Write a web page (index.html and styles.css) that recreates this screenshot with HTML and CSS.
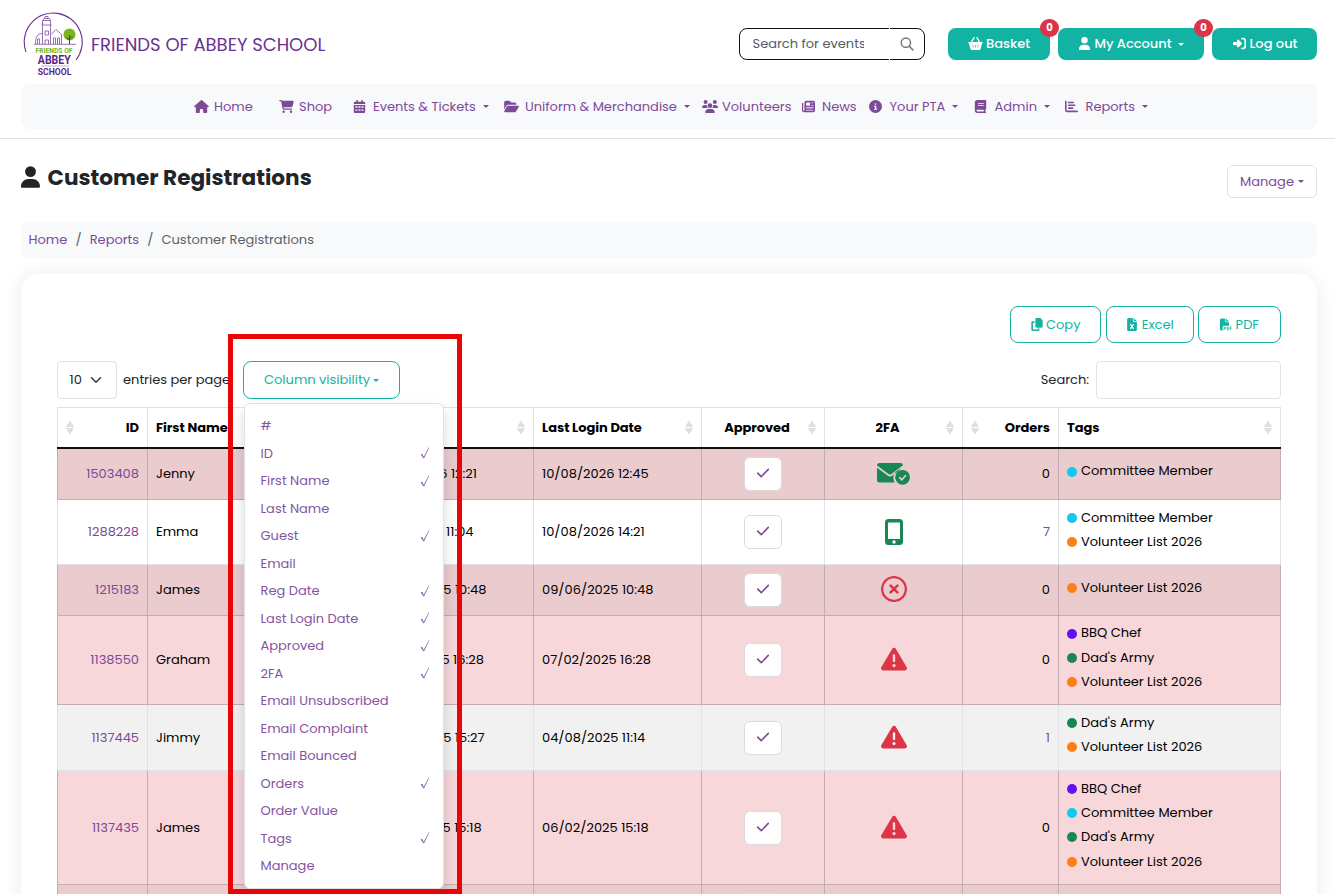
FILE: index.html
```html
<!DOCTYPE html>
<html lang="en">
<head>
    <meta charset="UTF-8">
    <meta name="viewport" content="width=device-width, initial-scale=1.0">
    <title>Customer Registrations - Friends of Abbey School</title>
    <link rel="stylesheet" href="styles.css">
</head>
<body>
    <!-- icon sprite -->
    <svg class="sprite" xmlns="http://www.w3.org/2000/svg">
        <symbol id="i-house" viewBox="0 0 576 512"><path d="M575.8 255.5c0 18-15 32.1-32 32.1h-32l.7 160.2c0 2.7-.2 5.4-.5 8.1V472c0 22.1-17.9 40-40 40H392c-22.1 0-40-17.9-40-40V384c0-17.7-14.3-32-32-32H256c-17.7 0-32 14.3-32 32v88c0 22.1-17.9 40-40 40H104c-22.1 0-40-17.9-40-40V287.6H32c-18 0-32-14-32-32.1c0-9 3-17 10-24L266.4 8c7-7 15-8 22-8s15 2 21 7L564.8 231.5c8 7 12 15 11 24z"/></symbol>
        <symbol id="i-cart" viewBox="0 0 576 512"><path d="M0 24C0 10.7 10.7 0 24 0H69.5c22 0 41.5 12.8 50.6 32h411c26.3 0 45.5 25 38.6 50.4l-41 152.3c-8.5 31.4-37 53.3-69.5 53.3H170.7l5.4 28.5c2.2 11.3 12.1 19.5 23.6 19.5H488c13.3 0 24 10.7 24 24s-10.7 24-24 24H199.7c-34.6 0-64.3-24.6-70.7-58.5L77.4 54.5c-.7-3.8-4-6.5-7.9-6.5H24C10.7 48 0 37.3 0 24zM128 464a48 48 0 1 1 96 0 48 48 0 1 1 -96 0zm336-48a48 48 0 1 1 0 96 48 48 0 1 1 0-96z"/></symbol>
        <symbol id="i-calendar" viewBox="0 0 448 512"><path fill-rule="evenodd" d="M96 32a32 32 0 0 1 64 0v32h128V32a32 32 0 0 1 64 0v32h48a48 48 0 0 1 48 48v48H0v-48a48 48 0 0 1 48-48h48zM0 192h448v272a48 48 0 0 1-48 48H48a48 48 0 0 1-48-48zM64 250v56h80v-56zm120 0v56h80v-56zm120 0v56h80v-56zM64 370v56h80v-56zm120 0v56h80v-56zm120 0v56h80v-56z"/></symbol>
        <symbol id="i-folder" viewBox="0 0 576 512"><path d="M88.7 223.8L0 375.8V96C0 60.7 28.7 32 64 32H181.5c17 0 33.3 6.7 45.3 18.7l26.5 26.5c12 12 28.3 18.7 45.3 18.7H416c35.3 0 64 28.7 64 64v32H144c-22.8 0-43.8 12.1-55.3 31.8zm27.6 16.1C122.1 230 132.6 224 144 224H544c11.5 0 22 6.1 27.7 16.1s5.7 22.2-.1 32.1l-112 192C453.9 474 443.4 480 432 480H32c-11.5 0-22-6.1-27.7-16.1s-5.7-22.2 .1-32.1l112-192z"/></symbol>
        <symbol id="i-users" viewBox="0 0 640 512"><path d="M144 0a80 80 0 1 1 0 160A80 80 0 1 1 144 0zM512 0a80 80 0 1 1 0 160A80 80 0 1 1 512 0zM0 298.7C0 239.8 47.8 192 106.7 192h42.7c15.9 0 31 3.5 44.6 9.7c-1.3 7.2-1.9 14.7-1.9 22.3c0 38.2 16.8 72.5 43.3 96H21.3C9.6 320 0 310.4 0 298.7zM405.3 320c26.6-23.5 43.3-57.8 43.3-96c0-7.6-.7-15-1.9-22.3c13.6-6.3 28.7-9.7 44.6-9.7h42.7C592.2 192 640 239.8 640 298.7c0 11.8-9.6 21.3-21.3 21.3zM224 224a96 96 0 1 1 192 0 96 96 0 1 1 -192 0zM128 485.3C128 411.7 187.7 352 261.3 352H378.7C452.3 352 512 411.7 512 485.3c0 14.7-11.9 26.7-26.7 26.7H154.7c-14.7 0-26.7-11.9-26.7-26.7z"/></symbol>
        <symbol id="i-news" viewBox="0 0 512 512"><path fill-rule="evenodd" d="M96 96a64 64 0 0 1 64-64h288a64 64 0 0 1 64 64v320a64 64 0 0 1-64 64H80a80 80 0 0 1-80-80V128a24 24 0 0 1 48 0v272a24 24 0 0 0 48 0zm64 24v80a24 24 0 0 0 24 24h112a24 24 0 0 0 24-24v-80a24 24 0 0 0-24-24H184a24 24 0 0 0-24 24zm208-24v32h80V96zm0 96v32h80v-32zM160 288v32h288v-32zm0 96v32h288v-32z"/></symbol>
        <symbol id="i-info" viewBox="0 0 512 512"><path d="M256 512A256 256 0 1 0 256 0a256 256 0 1 0 0 512zM216 336h24V272H216c-13.3 0-24-10.7-24-24s10.7-24 24-24h48c13.3 0 24 10.7 24 24v88h8c13.3 0 24 10.7 24 24s-10.7 24-24 24H216c-13.3 0-24-10.7-24-24s10.7-24 24-24zm40-208a32 32 0 1 1 0 64 32 32 0 1 1 0-64z"/></symbol>
        <symbol id="i-book" viewBox="0 0 448 512"><path fill-rule="evenodd" d="M96 0C43 0 0 43 0 96v320c0 53 43 96 96 96h320a32 32 0 0 0 0-64v-64a32 32 0 0 0 32-32V32a32 32 0 0 0-32-32zm0 384h256v64H96a32 32 0 0 1 0-64zm32-256v32h224v-32zm0 64v32h224v-32z"/></symbol>
        <symbol id="i-chart" viewBox="0 0 512 512"><path d="M32 48v352q0 48 48 48h400M144 96h180M144 208h240M144 320h160" fill="none" stroke="currentColor" stroke-width="60" stroke-linecap="round"/></symbol>
        <symbol id="i-basket" viewBox="0 0 576 512"><path fill-rule="evenodd" d="M253 36c7-11 2-26-9-33s-26-3-33 9L100 192H32a32 32 0 0 0 0 64l50 201a64 64 0 0 0 62 55h288a64 64 0 0 0 62-55l50-201a32 32 0 0 0 0-64h-68L365 12c-7-12-22-16-33-9s-16 22-9 33l93 156H160zM180 304h24v112h-24zm96 0h24v112h-24zm96 0h24v112h-24z"/></symbol>
        <symbol id="i-user" viewBox="0 0 448 512"><path d="M224 256A128 128 0 1 0 224 0a128 128 0 1 0 0 256zm-45.7 48C79.8 304 0 383.8 0 482.3C0 498.7 13.3 512 29.7 512H418.3c16.4 0 29.7-13.3 29.7-29.7C448 383.8 368.2 304 269.7 304H178.3z"/></symbol>
        <symbol id="i-login" viewBox="0 0 512 512"><path d="M217.9 105.9L340.7 228.7c7.2 7.2 11.3 17.1 11.3 27.3s-4.1 20.1-11.3 27.3L217.9 406.1c-6.4 6.4-15 9.9-24 9.9c-18.7 0-33.9-15.2-33.9-33.9l0-62.1L32 320c-17.7 0-32-14.3-32-32l0-64c0-17.7 14.3-32 32-32l128 0 0-62.1c0-18.7 15.2-33.9 33.9-33.9c9 0 17.6 3.6 24 9.9zM352 416l64 0c17.7 0 32-14.3 32-32l0-256c0-17.7-14.3-32-32-32l-64 0c-17.7 0-32-14.3-32-32s14.3-32 32-32l64 0c53 0 96 43 96 96l0 256c0 53-43 96-96 96l-64 0c-17.7 0-32-14.3-32-32s14.3-32 32-32z"/></symbol>
        <symbol id="i-search" viewBox="0 0 16 16"><path d="M12 6.5a5.3 5.3 0 1 1-10.6 0 5.3 5.3 0 0 1 10.6 0zM10.4 10.4L14.8 14.8" fill="none" stroke="currentColor" stroke-width="1.7" stroke-linecap="round"/></symbol>
        <symbol id="i-copy" viewBox="0 0 448 512"><path d="M208 0H332.1c12.7 0 24.9 5.1 33.9 14.1l67.9 67.9c9 9 14.1 21.2 14.1 33.9V336c0 26.5-21.5 48-48 48H208c-26.5 0-48-21.5-48-48V48c0-26.5 21.5-48 48-48zM48 128h80v64H64V448H256V416h64v48c0 26.5-21.5 48-48 48H48c-26.5 0-48-21.5-48-48V176c0-26.5 21.5-48 48-48z"/></symbol>
        <symbol id="i-excel" viewBox="0 0 384 512"><path d="M64 0C28.7 0 0 28.7 0 64V448c0 35.3 28.7 64 64 64H320c35.3 0 64-28.7 64-64V160H256c-17.7 0-32-14.3-32-32V0H64zM256 0V128H384L256 0z"/><path d="M130 240l124 190M254 240L130 430" fill="none" stroke="#fff" stroke-width="52"/></symbol>
        <symbol id="i-pdf" viewBox="0 0 512 512"><path d="M0 64C0 28.7 28.7 0 64 0H224V128c0 17.7 14.3 32 32 32H384V304H176c-35.3 0-64 28.7-64 64V512H64c-35.3 0-64-28.7-64-64V64zm384 64H256V0L384 128z"/><path d="M176 500V362h28a36 36 0 0 1 0 72h-28M304 362v128h24q28 0 28-32v-64q0-32-28-32zM432 500V362h70M432 430h54" fill="none" stroke="currentColor" stroke-width="34"/></symbol>
        <symbol id="i-check" viewBox="0 0 448 512"><path d="M26 262l134 132L422 122" fill="none" stroke="currentColor" stroke-width="60" stroke-linecap="round" stroke-linejoin="round"/></symbol>
        <symbol id="i-tick" viewBox="0 0 10 13"><path d="M.4 8.1L1.8 7.2L3.6 10.8L9 .6L9.6 .6L4 12.2H3.3z"/></symbol>
        <symbol id="i-warning" viewBox="0 0 512 512"><path d="M256 32c14.2 0 27.3 7.5 34.5 19.8l216 368c7.3 12.4 7.3 27.7 .2 40.1S486.3 480 472 480H40c-14.3 0-27.6-7.7-34.7-20.1s-7-27.8 .2-40.1l216-368C228.7 39.5 241.8 32 256 32zm0 128c-13.3 0-24 10.7-24 24V296c0 13.3 10.7 24 24 24s24-10.7 24-24V184c0-13.3-10.7-24-24-24zm32 224a32 32 0 1 0 -64 0 32 32 0 1 0 64 0z"/></symbol>
        <symbol id="i-xmark" viewBox="0 0 26 26"><circle cx="13" cy="13" r="11.9" fill="none" stroke="currentColor" stroke-width="2.3"/><path d="M9.6 9.6l6.8 6.8M16.4 9.6l-6.8 6.8" fill="none" stroke="currentColor" stroke-width="2.6" stroke-linecap="round"/></symbol>
        <symbol id="i-phone" viewBox="0 0 18 26"><path fill-rule="evenodd" d="M3.5 0h11A3.5 3.5 0 0 1 18 3.5v19a3.5 3.5 0 0 1-3.5 3.5h-11A3.5 3.5 0 0 1 0 22.5v-19A3.5 3.5 0 0 1 3.5 0zM3 3.5V20h12V3.5zM9 21.3a1.7 1.7 0 1 0 0 3.4 1.7 1.7 0 0 0 0-3.4z"/></symbol>
        <symbol id="i-mail" viewBox="0 0 33 22"><path d="M2.5 0h21A2.5 2.5 0 0 1 26 2.3L14.5 11q-1.5 1-3 0L0 2.5A2.5 2.5 0 0 1 2.5 0zM0 4.8l10.5 7.8q2.5 1.8 5 0L24 6.3A8.6 8.6 0 0 0 17.8 19.5H2.5A2.5 2.5 0 0 1 0 17z"/><circle cx="25.6" cy="14.3" r="7.4"/><path d="M22.6 14.6l2.2 2.2 3.9-4.2" fill="none" stroke="#eacccf" stroke-width="1.5" stroke-linecap="round"/></symbol>
    </svg>

    <header class="header">
        <div class="topbar">
            <a class="brand" href="#">
                <svg class="logo" viewBox="0 0 62 66">
                    <path class="ring" d="M3 41A29 29 0 1 1 53 49"/>
                    <g class="building">
                        <path d="M19.5 33V9.500h8V33M18.500 14h10M20 9.500l1-2h5.500l1 2M22 7.500v-2h3v2M22 20h3.500v4H22zM22 33v-4h3.500v4M19.500 22.500c-5 0-7 3-7 10.500M14.500 33v-5h2v5M28 23.500l5-5 5.500 5V33M30.500 33v-6h2v6M34.500 33v-6h2v6M11 33.300h42"/>
                    </g>
                    <circle class="tree" cx="46.500" cy="23.500" r="6"/>
                    <path class="trunk" d="M46.500 33v-9M46.500 28l3-3M46.500 29l-3-2.500"/>
                    <text class="logo-green" x="12.500" y="42.300" textLength="37" lengthAdjust="spacingAndGlyphs">FRIENDS OF</text>
                    <text class="logo-abbey" x="14.800" y="53" textLength="33" lengthAdjust="spacingAndGlyphs">ABBEY</text>
                    <path class="rule" d="M18 55h28"/>
                    <text class="logo-school" x="14.800" y="63.800" textLength="33.500" lengthAdjust="spacingAndGlyphs">SCHOOL</text>
                </svg>
                <span class="brand-name">FRIENDS OF ABBEY SCHOOL</span>
            </a>
            <div class="actions">
                <form class="site-search">
                    <div class="site-search-text"><span>Search for events</span></div>
                    <button type="button" class="site-search-btn"><svg><use href="#i-search"/></svg></button>
                </form>
                <a class="btn-teal btn-basket" href="#"><svg><use href="#i-basket"/></svg>Basket<span class="badge">0</span></a>
                <a class="btn-teal btn-account" href="#"><svg><use href="#i-user"/></svg>My Account<i class="caret"></i><span class="badge">0</span></a>
                <a class="btn-teal btn-logout" href="#"><svg><use href="#i-login"/></svg>Log out</a>
            </div>
        </div>
        <nav class="nav">
            <a href="#"><svg><use href="#i-house"/></svg>Home</a>
            <a href="#"><svg><use href="#i-cart"/></svg>Shop</a>
            <a href="#"><svg><use href="#i-calendar"/></svg>Events &amp; Tickets<i class="caret"></i></a>
            <a href="#"><svg><use href="#i-folder"/></svg>Uniform &amp; Merchandise<i class="caret"></i></a>
            <a href="#"><svg><use href="#i-users"/></svg>Volunteers</a>
            <a href="#"><svg><use href="#i-news"/></svg>News</a>
            <a href="#"><svg><use href="#i-info"/></svg>Your PTA<i class="caret"></i></a>
            <a href="#"><svg><use href="#i-book"/></svg>Admin<i class="caret"></i></a>
            <a href="#"><svg><use href="#i-chart"/></svg>Reports<i class="caret"></i></a>
        </nav>
    </header>

    <main class="page">
        <div class="page-head">
            <h1><svg><use href="#i-user"/></svg>Customer Registrations</h1>
            <button type="button" class="btn-manage">Manage<i class="caret"></i></button>
        </div>

        <div class="breadcrumb">
            <a href="#">Home</a><span class="sep">/</span><a href="#">Reports</a><span class="sep">/</span><span>Customer Registrations</span>
        </div>

        <section class="card">
            <div class="exports">
                <button type="button" class="btn-outline btn-copy"><svg><use href="#i-copy"/></svg>Copy</button>
                <button type="button" class="btn-outline btn-excel"><svg><use href="#i-excel"/></svg>Excel</button>
                <button type="button" class="btn-outline btn-pdf"><svg><use href="#i-pdf"/></svg>PDF</button>
            </div>

            <div class="controls">
                <div class="length">10<svg viewBox="0 0 16 16"><path d="M2 5l6 6 6-6"/></svg></div>
                <span class="length-label">entries per page</span>
                <div class="colvis">
                    <button type="button" class="btn-outline btn-colvis">Column visibility<i class="caret"></i></button>
                    <div class="highlight"></div>
                    <ul class="menu">
                        <li>#</li>
                        <li>ID<svg><use href="#i-tick"/></svg></li>
                        <li>First Name<svg><use href="#i-tick"/></svg></li>
                        <li>Last Name</li>
                        <li>Guest<svg><use href="#i-tick"/></svg></li>
                        <li>Email</li>
                        <li>Reg Date<svg><use href="#i-tick"/></svg></li>
                        <li>Last Login Date<svg><use href="#i-tick"/></svg></li>
                        <li>Approved<svg><use href="#i-tick"/></svg></li>
                        <li>2FA<svg><use href="#i-tick"/></svg></li>
                        <li>Email Unsubscribed</li>
                        <li>Email Complaint</li>
                        <li>Email Bounced</li>
                        <li>Orders<svg><use href="#i-tick"/></svg></li>
                        <li>Order Value</li>
                        <li>Tags<svg><use href="#i-tick"/></svg></li>
                        <li>Manage</li>
                    </ul>
                </div>
                <label class="search-label" for="search">Search:</label>
                <input class="search" id="search" type="text">
            </div>

            <table class="table">
                <colgroup>
                    <col class="c-id"><col class="c-first"><col class="c-guest"><col class="c-reg"><col class="c-login"><col class="c-approved"><col class="c-2fa"><col class="c-orders"><col class="c-tags">
                </colgroup>
                <thead>
                    <tr>
                        <th><div class="th rev">ID<i class="sort"></i></div></th>
                        <th><div class="th">First Name</div></th>
                        <th></th>
                        <th><div class="th"><span></span><i class="sort"></i></div></th>
                        <th><div class="th">Last Login Date<i class="sort"></i></div></th>
                        <th><div class="th mid"><span>Approved</span><i class="sort"></i></div></th>
                        <th><div class="th mid"><span>2FA</span><i class="sort"></i></div></th>
                        <th><div class="th rev">Orders<i class="sort"></i></div></th>
                        <th><div class="th">Tags<i class="sort"></i></div></th>
                    </tr>
                </thead>
                <tbody>
                    <tr class="danger r1">
                        <td class="num"><a href="#">1503408</a></td><td>Jenny</td><td></td><td>10/08/2026 12:21</td><td>10/08/2026 12:45</td>
                        <td class="center"><span class="tick"><svg><use href="#i-check"/></svg></span></td>
                        <td class="center"><svg class="fa-mail"><use href="#i-mail"/></svg></td>
                        <td class="num">0</td>
                        <td class="tags"><div><i class="dot cyan"></i>Committee Member</div></td>
                    </tr>
                    <tr class="r2">
                        <td class="num"><a href="#">1288228</a></td><td>Emma</td><td></td><td>12/01/2024 11:04</td><td>10/08/2026 14:21</td>
                        <td class="center"><span class="tick"><svg><use href="#i-check"/></svg></span></td>
                        <td class="center"><svg class="fa-phone"><use href="#i-phone"/></svg></td>
                        <td class="num"><a href="#">7</a></td>
                        <td class="tags"><div><i class="dot cyan"></i>Committee Member</div><div><i class="dot orange"></i>Volunteer List 2026</div></td>
                    </tr>
                    <tr class="danger r3">
                        <td class="num"><a href="#">1215183</a></td><td>James</td><td></td><td>09/06/2025 10:48</td><td>09/06/2025 10:48</td>
                        <td class="center"><span class="tick"><svg><use href="#i-check"/></svg></span></td>
                        <td class="center"><svg class="fa-xmark"><use href="#i-xmark"/></svg></td>
                        <td class="num">0</td>
                        <td class="tags"><div><i class="dot orange"></i>Volunteer List 2026</div></td>
                    </tr>
                    <tr class="danger r4">
                        <td class="num"><a href="#">1138550</a></td><td>Graham</td><td></td><td>07/02/2025 16:28</td><td>07/02/2025 16:28</td>
                        <td class="center"><span class="tick"><svg><use href="#i-check"/></svg></span></td>
                        <td class="center"><svg class="fa-warning"><use href="#i-warning"/></svg></td>
                        <td class="num">0</td>
                        <td class="tags"><div><i class="dot indigo"></i>BBQ Chef</div><div><i class="dot green"></i>Dad's Army</div><div><i class="dot orange"></i>Volunteer List 2026</div></td>
                    </tr>
                    <tr class="r5">
                        <td class="num"><a href="#">1137445</a></td><td>Jimmy</td><td></td><td>04/08/2025 15:27</td><td>04/08/2025 11:14</td>
                        <td class="center"><span class="tick"><svg><use href="#i-check"/></svg></span></td>
                        <td class="center"><svg class="fa-warning"><use href="#i-warning"/></svg></td>
                        <td class="num"><a href="#">1</a></td>
                        <td class="tags"><div><i class="dot green"></i>Dad's Army</div><div><i class="dot orange"></i>Volunteer List 2026</div></td>
                    </tr>
                    <tr class="danger r6">
                        <td class="num"><a href="#">1137435</a></td><td>James</td><td></td><td>06/02/2025 15:18</td><td>06/02/2025 15:18</td>
                        <td class="center"><span class="tick"><svg><use href="#i-check"/></svg></span></td>
                        <td class="center"><svg class="fa-warning"><use href="#i-warning"/></svg></td>
                        <td class="num">0</td>
                        <td class="tags"><div><i class="dot indigo"></i>BBQ Chef</div><div><i class="dot cyan"></i>Committee Member</div><div><i class="dot green"></i>Dad's Army</div><div><i class="dot orange"></i>Volunteer List 2026</div></td>
                    </tr>
                    <tr class="danger r7">
                        <td></td><td></td><td></td><td></td><td></td>
                        <td class="center"><span class="tick"></span></td>
                        <td></td><td></td><td></td>
                    </tr>
                </tbody>
            </table>
        </section>
    </main>
</body>
</html>
```

FILE: styles.css
```css
* {
    margin: 0;
    padding: 0;
    box-sizing: border-box;
}

html, body {
    height: 894px;
    overflow: hidden;
}

body {
    font-family: "Poppins", "Inter", sans-serif;
    font-size: 13px;
    line-height: 20px;
    color: #212529;
    background: #fff;
}

a {
    color: #7c4a97;
    text-decoration: none;
}

button, input {
    font: inherit;
    background: #fff;
}

svg {
    fill: currentColor;
    flex: none;
}

.sprite {
    display: none;
}

.caret {
    flex: none;
    border: 3px solid transparent;
    border-top-color: currentColor;
    border-bottom: 0;
}

/* header */
.header {
    height: 139px;
    padding: 0 18px 0 21px;
    border-bottom: 1px solid #dee2e6;
}

.topbar {
    height: 84px;
    display: flex;
    justify-content: space-between;
}

.brand {
    display: flex;
    padding-top: 11px;
    color: #6a3192;
}

.logo {
    width: 62px;
    height: 66px;
    margin-left: 2px;
    font-family: "Roboto", sans-serif;
    font-weight: 700;
}

.ring {
    fill: none;
    stroke: #6a3192;
    stroke-width: 1.1;
}

.building {
    fill: none;
    stroke: #8a62ab;
    stroke-width: 0.9;
}

.tree {
    fill: #7ab51d;
}

.trunk {
    fill: none;
    stroke: #50404a;
    stroke-width: 1;
}

.rule {
    stroke: #c6aed8;
    stroke-width: 1;
}

.logo-green {
    fill: #7ab51d;
    font-size: 7.5px;
}

.logo-abbey {
    fill: #5b2787;
    font-size: 12px;
}

.logo-school {
    fill: #5b2787;
    font-size: 9.5px;
}

.brand-name {
    margin: 22px 0 0 6px;
    font-size: 18px;
    line-height: 24px;
}

.actions {
    display: flex;
    padding-top: 28px;
    gap: 8px;
}

.site-search {
    width: 186px;
    height: 32px;
    margin-right: 15px;
    display: flex;
    border: 1px solid #111;
    border-radius: 8px;
}

.site-search-text {
    width: 150px;
    height: 32px;
    margin-top: -1px;
    padding: 6px 0 0 12.5px;
    border-right: 1px solid #fff;
    color: #555b60;
}

.site-search-text span {
    display: block;
    width: 111px;
    overflow: hidden;
    white-space: nowrap;
}

.site-search-btn {
    flex: 1;
    border: 0;
    color: #6c757d;
    background: none;
}

.site-search-btn svg {
    display: block;
    width: 14px;
    height: 14px;
    margin: 0 auto;
}

.btn-teal {
    position: relative;
    height: 32px;
    display: flex;
    align-items: center;
    justify-content: center;
    border-radius: 8px;
    color: #fff;
    background: #12b3a2;
    font-weight: 500;
}

.btn-basket {
    width: 102px;
}

.btn-account {
    width: 146px;
}

.btn-logout {
    width: 105px;
}

.btn-teal svg {
    width: 15px;
    height: 13px;
    margin: -1px 3px 0 0;
}

.btn-account svg {
    width: 13px;
}

.btn-teal .caret {
    margin-left: 6px;
}

.badge {
    position: absolute;
    top: -9px;
    right: -9px;
    width: 19px;
    height: 18px;
    border-radius: 9px;
    background: #dc3545;
    font-size: 10px;
    font-weight: 700;
    line-height: 18px;
    text-align: center;
}

.nav {
    height: 45px;
    padding-left: 173px;
    display: grid;
    grid-template-columns: 85px 73px 152px 198px 99px 67px 105px 91px 90px;
    align-items: center;
    border-radius: 8px;
    background: #f8f9fb;
}

.nav a {
    display: flex;
    align-items: center;
    white-space: nowrap;
}

.nav svg {
    width: 15px;
    height: 13px;
    margin-right: 5px;
}

.nav a:nth-child(n+3) svg {
    margin-right: 6px;
}

.nav a:nth-child(5) svg {
    width: 16px;
    margin-right: 4px;
}

.nav a:nth-child(n+7) svg {
    margin-right: 6.5px;
}

.nav .caret {
    margin-left: 7px;
}

/* page */
.page {
    padding: 26px 18px 0 21px;
}

.page-head {
    height: 57px;
    display: flex;
    justify-content: space-between;
}

h1 {
    display: flex;
    height: 25px;
    align-items: center;
    font-size: 21.6px;
}

h1 svg {
    width: 19px;
    height: 22px;
    margin: -2px 7.5px 0 0;
}

.btn-manage {
    width: 90px;
    height: 33px;
    display: flex;
    align-items: center;
    justify-content: center;
    gap: 4px;
    border: 1px solid #dee2e6;
    border-radius: 6px;
    color: #7c4a97;
}

.breadcrumb {
    height: 36px;
    padding: 8px 7.5px;
    border-radius: 8px;
    background: #f8f9fb;
    color: #5c6166;
}

.breadcrumb .sep {
    margin: 0 8.1px;
}

.card {
    margin-top: 16px;
    height: 700px;
    padding: 32px 36px;
    border-radius: 18px;
    background: #fff;
    box-shadow: 0 0 20px rgba(0, 0, 0, 0.08);
}

.exports {
    display: flex;
    justify-content: flex-end;
    gap: 4px;
}

.btn-outline {
    height: 37px;
    display: flex;
    align-items: center;
    justify-content: center;
    gap: 3.5px;
    border: 1px solid #12b3a2;
    border-radius: 8px;
    color: #12b3a2;
}

.btn-outline svg {
    width: 12px;
    height: 13px;
}

.btn-copy {
    width: 91px;
    margin-right: 1px;
}

.btn-excel {
    width: 88px;
}

.btn-pdf {
    width: 83px;
}

.controls {
    display: flex;
    align-items: center;
    height: 38px;
    margin-top: 18px;
}

.length {
    width: 60px;
    height: 38px;
    padding: 0 14px 0 11.5px;
    display: flex;
    align-items: center;
    justify-content: space-between;
    border: 1px solid #dee2e6;
    border-radius: 4px;
}

.length svg {
    width: 12px;
    height: 12px;
    fill: none;
    stroke: #343a40;
    stroke-width: 2;
    stroke-linecap: round;
    stroke-linejoin: round;
}

.length-label {
    width: 120px;
    margin-left: 6px;
    white-space: nowrap;
}

.colvis {
    position: relative;
}

.btn-colvis {
    width: 157px;
    height: 38px;
    gap: 3px;
}

.menu {
    position: absolute;
    z-index: 2;
    top: 42px;
    left: 1px;
    width: 200px;
    height: 486px;
    padding: 8.4px 0;
    border: 1px solid #dee2e6;
    border-radius: 6px;
    background: #fff;
    box-shadow: 0 8px 16px rgba(0, 0, 0, 0.15);
    list-style: none;
    color: #8554a0;
}

.menu li {
    height: 27.53px;
    padding: 0 13px 0 15.5px;
    display: flex;
    align-items: center;
    justify-content: space-between;
}

.menu svg {
    width: 10px;
    height: 12px;
    margin-bottom: 1px;
}

/* red frame around the column menu */
.highlight {
    position: absolute;
    z-index: 3;
    top: -27px;
    left: -15px;
    width: 234px;
    height: 560px;
    border: 5px solid #ea0606;
    pointer-events: none;
}

.search-label {
    margin-left: auto;
}

.search {
    width: 185px;
    height: 38px;
    margin-left: 7px;
    border: 1px solid #dee2e6;
    border-radius: 4px;
}

/* table */
.table {
    width: 1224px;
    margin-top: 8px;
    border-collapse: collapse;
    table-layout: fixed;
    color: #000;
}

.c-id { width: 90px; }
.c-first { width: 118px; }
.c-guest { width: 101px; }
.c-reg { width: 167px; }
.c-login { width: 168px; }
.c-approved { width: 123px; }
.c-2fa { width: 138px; }
.c-orders { width: 96px; }
.c-tags { width: 222px; }

th, td {
    padding: 0 8px;
    border: 1px solid #dee2e6;
    text-align: left;
    vertical-align: middle;
}

th {
    height: 40px;
    padding-top: 1px;
    border-bottom: 2px solid #111;
}

.th {
    display: flex;
    align-items: center;
    justify-content: space-between;
    white-space: nowrap;
    font-weight: 700;
    letter-spacing: -0.05px;
}

.rev {
    flex-direction: row-reverse;
}

.mid span {
    flex: 1;
    padding-right: 4px;
    text-align: center;
}

.sort {
    width: 8px;
    height: 15px;
    margin-top: -1px;
    background:
        linear-gradient(to bottom right, transparent 50%, #e0e0e0 50%) 0 0 / 4px 7px no-repeat,
        linear-gradient(to bottom left, transparent 50%, #e0e0e0 50%) 4px 0 / 4px 7px no-repeat,
        linear-gradient(to top right, transparent 50%, #e0e0e0 50%) 0 8px / 4px 7px no-repeat,
        linear-gradient(to top left, transparent 50%, #e0e0e0 50%) 4px 8px / 4px 7px no-repeat;
}

.num {
    text-align: right;
}

.center {
    padding-right: 8px;
    text-align: center;
}

.danger td {
    border-color: #c6acae;
    background: #f7d7da;
}

.r1.danger td, .r3.danger td, .r7.danger td {
    background: #eacccf;
}

.r5 td {
    background: #f1f1f1;
}

.r1 { height: 52px; }
.r2 { height: 65px; }
.r3 { height: 51px; }
.r4 { height: 89px; }
.r5 { height: 66px; }
.r6 { height: 114px; }
.r7 { height: 51px; }

.tick {
    width: 38px;
    height: 34px;
    margin: 0 auto;
    display: flex;
    align-items: center;
    justify-content: center;
    border: 1px solid #dcdcdc;
    border-radius: 6px;
    background: #fff;
    color: #7c4a97;
}

.tick svg {
    width: 12px;
    height: 14px;
    margin-bottom: 2px;
}

td > svg {
    display: block;
    margin: 0 auto 1px;
}

.fa-mail {
    width: 33px;
    height: 22px;
    margin-bottom: 0;
    color: #198754;
}

.fa-phone {
    width: 18px;
    height: 26px;
    color: #198754;
}

.fa-xmark {
    width: 26px;
    height: 26px;
    margin-bottom: 2px;
    color: #dc3545;
}

.fa-warning {
    width: 26px;
    height: 26px;
    margin-bottom: 2px;
    color: #dc3545;
}

.tags {
    padding-bottom: 4.3px;
    line-height: 24.3px;
}

.tags div {
    display: flex;
    align-items: center;
}

.dot {
    width: 10px;
    height: 10px;
    margin-right: 4px;
    border-radius: 50%;
}

.cyan { background: #0dcaf0; }
.orange { background: #fd7e14; }
.indigo { background: #6610f2; }
.green { background: #198754; }
```
